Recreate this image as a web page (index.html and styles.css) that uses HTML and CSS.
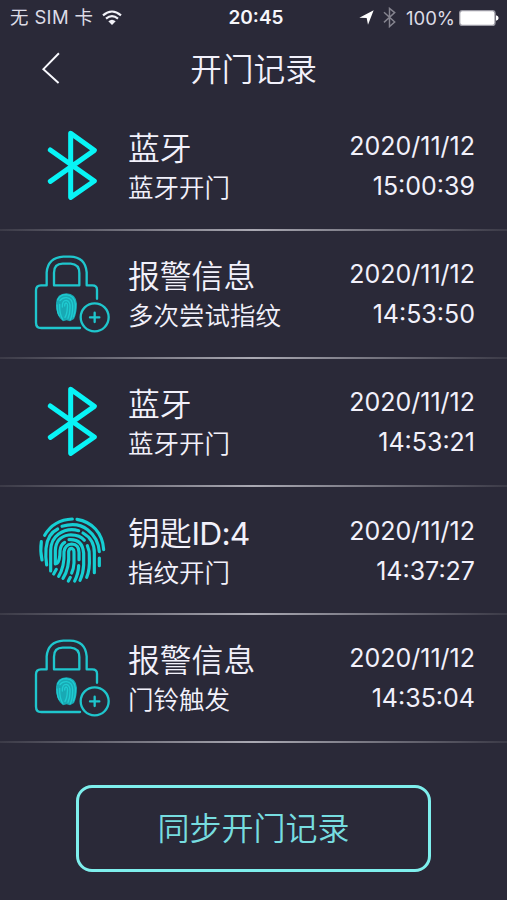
FILE: index.html
```html
<!DOCTYPE html>
<html lang="zh-CN">
<head>
<meta charset="utf-8">
<meta name="viewport" content="width=device-width">
<title>开门记录</title>
<link rel="stylesheet" href="styles.css">
</head>
<body>
<svg class="defs" aria-hidden="true">
  <symbol id="bt" viewBox="0 0 300 300">
    <path d="M91 105 L223 198 L152 247 V55 L223 106 L91 199" fill="none" stroke="#08f4f6" stroke-width="15" stroke-linecap="round" stroke-linejoin="round"/>
  </symbol>
  <symbol id="lock" viewBox="0 0 300 300">
    <g fill="none" stroke="#1fc6cd" stroke-width="7" stroke-linecap="round" stroke-linejoin="round">
      <path d="M231 161 V134 Q231 121 217 121 H200 V82 Q196 36 150 35 H130 Q84 38 80 82 V121 H63 Q48 121 48 136 V233 Q48 249 64 249 H180"/>
      <path d="M102 121 V83 Q102 56 128 56 H152 Q178 58 178 84 V121 Z"/>
      <circle cx="224" cy="217" r="42"/>
      <path d="M210 217 H238 M224 203 V231"/>
    </g>
    <path d="M108 174 Q110 146 139 145 Q168 146 171 176 Q171 203 162 222 L150 229 L140 226 L129 229 Q108 215 108 174Z" fill="#18a9b4"/>
    <g fill="none" stroke="#20cbd1" stroke-width="4" stroke-linecap="round">
      <path d="M113 165 Q120 149 138 149 Q163 151 166 178 Q167 202 160 216"/>
      <path d="M111 180 Q111 202 118 213 M120 167 Q127 157 140 158 Q158 161 158 183 Q158 209 151 224"/>
      <path d="M119 178 Q118 207 128 223 M127 186 Q126 166 139 166 Q151 168 150 188 Q150 207 144 220 M134 183 Q134 174 139 174 Q144 176 142 188 Q141 207 135 217"/>
    </g>
  </symbol>
  <symbol id="finger" viewBox="0 0 300 300">
    <g fill="none" stroke="#16cfd3" stroke-width="9.5" stroke-linecap="round">
      <path d="M74 106 Q101 59 157 57 M171 58 C215 65 248 98 251 149"/>
      <path d="M64 125 Q60 151 66 180 M238 174 V197"/>
      <path d="M80 195 Q76 173 78 145 Q82 102 113 87 M126 79 Q172 65 203 89 Q235 114 238 155"/>
      <path d="M92 213 V151 Q93 119 115 103 Q143 82 176 92 M189 99 Q224 119 223 159 V218"/>
      <path d="M106 192 V151 Q108 111 146 105 Q179 103 193 121 M202 137 Q210 155 208 172 Q210 208 200 232"/>
      <path d="M111 190 Q120 182 120 152 Q122 134 134 127 M147 119 Q187 116 191 159 V195 Q190 220 180 241"/>
      <path d="M116 229 Q134 200 132 155 Q135 134 155 132 Q177 133 177 157 V179 M176 197 Q175 222 164 243"/>
      <path d="M129 235 Q149 205 146 154 Q148 144 156 145 Q163 148 162 160 V189 Q161 207 155 219 M145 243 L151 232 M101 222 L109 208"/>
    </g>
  </symbol>
</svg>
<main class="screen">
  <header class="status">
    <div class="status-left">
      <span>无 SIM 卡</span>
      <svg class="wifi" viewBox="0 0 60 45"><g fill="none" stroke="#f2f2f8" stroke-width="6.5"><path d="M3 16 Q30 -7 57 16"/><path d="M12 26 Q30 11 48 26"/></g><path d="M19 34 Q30 24 41 34 L30 45Z" fill="#f2f2f8"/></svg>
    </div>
    <time class="clock">20:45</time>
    <div class="status-right">
      <svg class="arrow" viewBox="0 0 45 45"><path d="M1 23 L44 1 L27 44 L23 24Z" fill="#fff"/></svg>
      <svg class="bt-small" viewBox="0 0 40 64"><path d="M3 16 L36 46 L20 60 V4 L36 17 L3 47" fill="none" stroke="#85848f" stroke-width="4.5"/></svg>
      <span class="percent">100%</span>
      <svg class="battery" viewBox="0 0 120 48"><rect x="2" y="2" width="106" height="44" rx="8" fill="#fff" stroke="#9a99a3" stroke-width="4"/><path d="M111 16 Q119 18 119 24 Q119 30 111 32Z" fill="#fff"/></svg>
    </div>
  </header>
  <nav class="nav">
    <svg class="back" viewBox="0 0 60 100"><path d="M54 7 L7 55 L53 97" fill="none" stroke="#fafaff" stroke-width="6"/></svg>
    <h1>开门记录</h1>
  </nav>
  <ul class="list">
    <li class="row"><svg class="icon"><use href="#bt"/></svg><div class="info"><h2>蓝牙</h2><p>蓝牙开门</p></div><div class="when"><span>2020/11/12</span><span>15:00:39</span></div></li>
    <li class="row"><svg class="icon icon-lock"><use href="#lock"/></svg><div class="info"><h2>报警信息</h2><p>多次尝试指纹</p></div><div class="when"><span>2020/11/12</span><span>14:53:50</span></div></li>
    <li class="row"><svg class="icon"><use href="#bt"/></svg><div class="info"><h2>蓝牙</h2><p>蓝牙开门</p></div><div class="when"><span>2020/11/12</span><span>14:53:21</span></div></li>
    <li class="row row-key"><svg class="icon"><use href="#finger"/></svg><div class="info"><h2>钥匙<span class="key-id">ID:4</span></h2><p>指纹开门</p></div><div class="when"><span>2020/11/12</span><span>14:37:27</span></div></li>
    <li class="row"><svg class="icon icon-lock"><use href="#lock"/></svg><div class="info"><h2>报警信息</h2><p>门铃触发</p></div><div class="when"><span>2020/11/12</span><span>14:35:04</span></div></li>
  </ul>
  <button class="sync" type="button">同步开门记录</button>
</main>
</body>
</html>
```
FILE: styles.css
```css
* { box-sizing: border-box; margin: 0; padding: 0; }
body {
  background: #2a2938;
  color: #f2f1fb;
  font-family: Inter, "Noto Sans CJK SC", sans-serif;
}
.defs { position: absolute; width: 0; height: 0; }
.screen {
  width: 507px;
  height: 900px;
  display: flex;
  flex-direction: column;
  overflow: hidden;
}
.status {
  height: 34px;
  padding: 0 8px 0 10px;
  display: grid;
  grid-template-columns: 1fr auto 1fr;
  align-items: center;
  font-size: 18.5px;
  line-height: 34px;
  color: #dddce6;
}
.status-left, .status-right { display: flex; align-items: center; }
.status-left { gap: 9px; letter-spacing: 0.35px; }
.status-left span { margin-top: -1px; }
.status-right { justify-content: flex-end; }
.wifi { width: 20px; height: 15px; }
.clock { padding: 1px 0 0 3px; font-size: 19px; font-weight: 600; color: #f6f6fb; }
.arrow { width: 15px; height: 15px; margin-right: 9px; }
.bt-small { width: 13px; height: 21px; margin-right: 10px; }
.percent { margin-right: 4px; }
.battery { width: 40px; height: 16px; }
.nav {
  height: 68px;
  display: grid;
  grid-template-columns: 41px 1fr 41px;
  align-items: center;
}
.back { grid-column: 1; width: 20px; height: 33px; margin: -3px 0 0 41px; }
.nav h1 {
  grid-column: 2;
  padding-top: 2px;
  text-align: center;
  font-size: 31.7px;
  font-weight: 350;
  line-height: 68px;
}
.list { list-style: none; padding-top: 0.8px; }
.row {
  height: 128.1px;
  padding: 0 32px 0 20px;
  display: grid;
  grid-template-columns: 108px 1fr auto;
  background: linear-gradient(90deg, #3b3a47, #aaa9b3 50%, #3b3a47) 0 100% / 100% 2px no-repeat;
}
.icon { width: 100px; height: 100px; margin-top: 12px; }
.icon-lock { margin-top: 14px; }
.info { padding-top: 25px; white-space: nowrap; }
.info h2 { font-size: 31.8px; font-weight: 350; line-height: 42px; }
.info p { font-size: 25.5px; font-weight: 350; line-height: 35px; }
.key-id { font-weight: 400; letter-spacing: -0.8px; }
.when {
  padding-top: 23px;
  display: flex;
  flex-direction: column;
  align-items: flex-end;
  font-size: 25px;
  line-height: 40px;
}
.row-key .icon { margin-top: 13px; }
.row-key .info { padding-top: 26px; }
.row-key .when { padding-top: 24px; }
.sync {
  width: 355px;
  height: 87px;
  margin: 42px 0 0 76px;
  border: 3px solid #7eefed;
  border-radius: 16px;
  background: transparent;
  color: #77dde0;
  font: 350 32px/1 Inter, "Noto Sans CJK SC", sans-serif;
}
```
